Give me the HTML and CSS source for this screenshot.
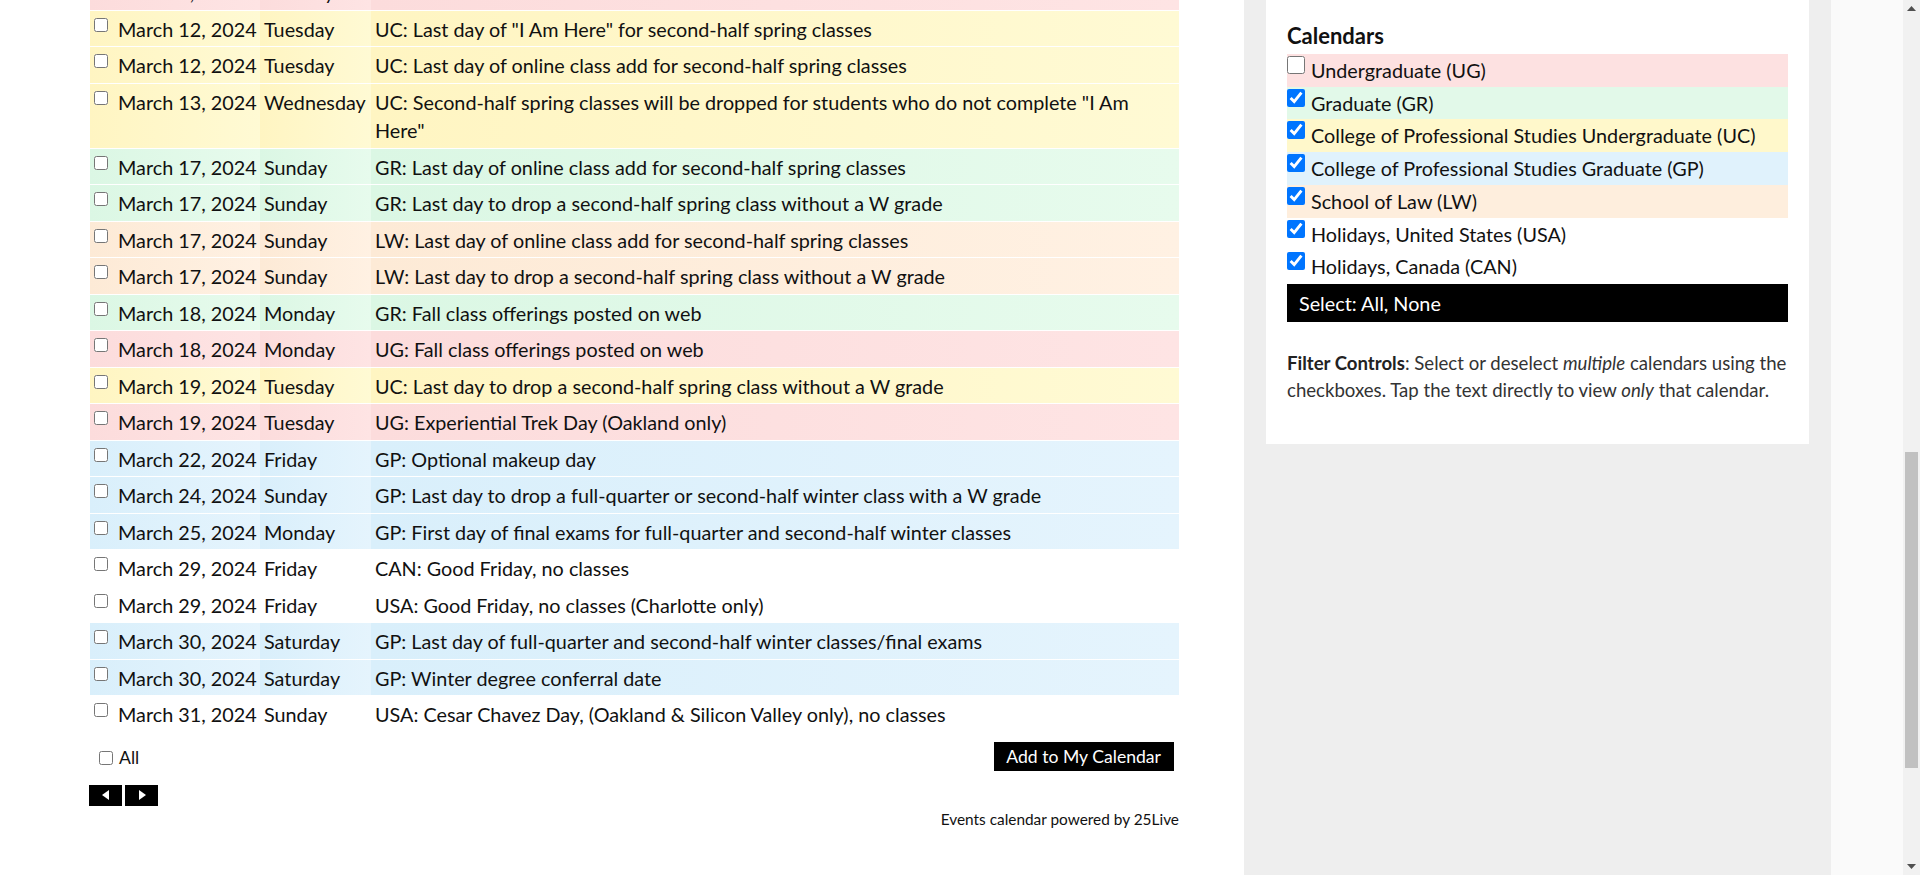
FILE: index.html
```html
<!DOCTYPE html>
<html lang="en">
<head>
<meta charset="utf-8">
<title>Academic Calendar</title>
<link rel="stylesheet" href="styles.css">
</head>
<body>
<div class="page">
  <main class="main">
    <div class="table-clip">
      <table class="events">
        <colgroup><col class="col-date"><col class="col-day"><col></colgroup>
        <tbody>
          <tr class="ug"><td class="c-date"><input type="checkbox"><span>March 5, 2024</span></td><td>Tuesday</td><td>UG: Midterm academic alerts due</td></tr>
          <tr class="uc"><td class="c-date"><input type="checkbox"><span>March 12, 2024</span></td><td>Tuesday</td><td>UC: Last day of "I Am Here" for second-half spring classes</td></tr>
          <tr class="uc"><td class="c-date"><input type="checkbox"><span>March 12, 2024</span></td><td>Tuesday</td><td>UC: Last day of online class add for second-half spring classes</td></tr>
          <tr class="uc"><td class="c-date"><input type="checkbox"><span>March 13, 2024</span></td><td>Wednesday</td><td>UC: Second-half spring classes will be dropped for students who do not complete "I Am Here"</td></tr>
          <tr class="gr"><td class="c-date"><input type="checkbox"><span>March 17, 2024</span></td><td>Sunday</td><td>GR: Last day of online class add for second-half spring classes</td></tr>
          <tr class="gr"><td class="c-date"><input type="checkbox"><span>March 17, 2024</span></td><td>Sunday</td><td>GR: Last day to drop a second-half spring class without a W grade</td></tr>
          <tr class="lw"><td class="c-date"><input type="checkbox"><span>March 17, 2024</span></td><td>Sunday</td><td>LW: Last day of online class add for second-half spring classes</td></tr>
          <tr class="lw"><td class="c-date"><input type="checkbox"><span>March 17, 2024</span></td><td>Sunday</td><td>LW: Last day to drop a second-half spring class without a W grade</td></tr>
          <tr class="gr"><td class="c-date"><input type="checkbox"><span>March 18, 2024</span></td><td>Monday</td><td>GR: Fall class offerings posted on web</td></tr>
          <tr class="ug"><td class="c-date"><input type="checkbox"><span>March 18, 2024</span></td><td>Monday</td><td>UG: Fall class offerings posted on web</td></tr>
          <tr class="uc"><td class="c-date"><input type="checkbox"><span>March 19, 2024</span></td><td>Tuesday</td><td>UC: Last day to drop a second-half spring class without a W grade</td></tr>
          <tr class="ug"><td class="c-date"><input type="checkbox"><span>March 19, 2024</span></td><td>Tuesday</td><td>UG: Experiential Trek Day (Oakland only)</td></tr>
          <tr class="gp"><td class="c-date"><input type="checkbox"><span>March 22, 2024</span></td><td>Friday</td><td>GP: Optional makeup day</td></tr>
          <tr class="gp"><td class="c-date"><input type="checkbox"><span>March 24, 2024</span></td><td>Sunday</td><td>GP: Last day to drop a full-quarter or second-half winter class with a W grade</td></tr>
          <tr class="gp"><td class="c-date"><input type="checkbox"><span>March 25, 2024</span></td><td>Monday</td><td>GP: First day of final exams for full-quarter and second-half winter classes</td></tr>
          <tr class="plain"><td class="c-date"><input type="checkbox"><span>March 29, 2024</span></td><td>Friday</td><td>CAN: Good Friday, no classes</td></tr>
          <tr class="plain"><td class="c-date"><input type="checkbox"><span>March 29, 2024</span></td><td>Friday</td><td>USA: Good Friday, no classes (Charlotte only)</td></tr>
          <tr class="gp"><td class="c-date"><input type="checkbox"><span>March 30, 2024</span></td><td>Saturday</td><td>GP: Last day of full-quarter and second-half winter classes/final exams</td></tr>
          <tr class="gp"><td class="c-date"><input type="checkbox"><span>March 30, 2024</span></td><td>Saturday</td><td>GP: Winter degree conferral date</td></tr>
          <tr class="plain"><td class="c-date"><input type="checkbox"><span>March 31, 2024</span></td><td>Sunday</td><td>USA: Cesar Chavez Day, (Oakland &amp; Silicon Valley only), no classes</td></tr>
        </tbody>
      </table>
    </div>
    <div class="foot">
      <label class="all"><input type="checkbox">All</label>
      <button class="add-btn" type="button">Add to My Calendar</button>
    </div>
    <div class="pager">
      <button class="pg" type="button" aria-label="Previous"><svg width="8" height="10" viewBox="0 0 8 10"><path d="M7 0 L7 10 L0 5 Z" fill="#fff"/></svg></button>
      <button class="pg" type="button" aria-label="Next"><svg width="8" height="10" viewBox="0 0 8 10"><path d="M1 0 L1 10 L8 5 Z" fill="#fff"/></svg></button>
    </div>
    <div class="powered">Events calendar powered by 25Live</div>
  </main>
  <aside class="side">
    <div class="panel">
      <h2 class="cal-title">Calendars</h2>
      <ul class="cals">
        <li class="ug"><input type="checkbox"><span>Undergraduate (UG)</span></li>
        <li class="gr"><input type="checkbox" checked><span>Graduate (GR)</span></li>
        <li class="uc"><input type="checkbox" checked><span>College of Professional Studies Undergraduate (UC)</span></li>
        <li class="gp"><input type="checkbox" checked><span>College of Professional Studies Graduate (GP)</span></li>
        <li class="lw"><input type="checkbox" checked><span>School of Law (LW)</span></li>
        <li class="plain"><input type="checkbox" checked><span>Holidays, United States (USA)</span></li>
        <li class="plain"><input type="checkbox" checked><span>Holidays, Canada (CAN)</span></li>
      </ul>
      <div class="select-bar">Select: All, None</div>
      <p class="help"><strong>Filter Controls</strong>: Select or deselect <em>multiple</em> calendars using the checkboxes. Tap the text directly to view <em>only</em> that calendar.</p>
    </div>
  </aside>
  <div class="edge"></div>
  <div class="scrollbar">
    <div class="sb-arrow"><svg width="9" height="5" viewBox="0 0 9 5"><path d="M0 5 L4.5 0 L9 5 Z" fill="#505050"/></svg></div>
    <div class="sb-track"><div class="sb-thumb"></div></div>
    <div class="sb-arrow"><svg width="9" height="5" viewBox="0 0 9 5"><path d="M0 0 L4.5 5 L9 0 Z" fill="#505050"/></svg></div>
  </div>
</div>
</body>
</html>
```
FILE: styles.css
```css
html, body {
  margin: 0;
  height: 100%;
  overflow: hidden;
}
body {
  font-family: Lato, "Open Sans", "Liberation Sans", sans-serif;
  color: #111;
  background: #fff;
}
.page {
  display: flex;
  height: 875px;
}
.main {
  flex: none;
  width: 1089px;
  padding-left: 90px;
  margin-right: 65px;
}
.table-clip {
  overflow: hidden;
}
.events {
  width: 1089px;
  table-layout: fixed;
  border-collapse: separate;
  border-spacing: 0;
  margin-top: -26px;
  font-size: 19.8px;
  line-height: 28.5px;
}
.col-date { width: 170px; }
.col-day { width: 111px; }
.events td {
  padding: 4px 4px 3px;
  border-bottom: 1px solid #fff;
  vertical-align: top;
  background: linear-gradient(to right, var(--c1), var(--c2));
}
.events td.c-date {
  white-space: nowrap;
}
.events td.c-date input {
  width: 14px;
  height: 14px;
  margin: 3px 10px 0 0;
  vertical-align: top;
}
.ug { --c1: #fcdcdc; --c2: #fee4e4; --c: #fde1e1; }
.gr { --c1: #dbf7e4; --c2: #e7fbed; --c: #e2f9e9; }
.uc { --c1: #fff5c2; --c2: #fffad4; --c: #fff8cb; }
.gp { --c1: #d9effb; --c2: #e5f4fd; --c: #e0f2fc; }
.lw { --c1: #fdead6; --c2: #fff1e3; --c: #feeedd; }
.plain { --c1: #fff; --c2: #fff; --c: #fff; }
.cals li { background: var(--c); }

.foot {
  display: flex;
  justify-content: space-between;
  align-items: flex-start;
  margin-top: 9px;
  padding-right: 5px;
}
.all {
  display: flex;
  align-items: flex-start;
  padding: 5px 0 0 9px;
  font-size: 17.6px;
  line-height: 21px;
}
.all input {
  width: 14px;
  height: 14px;
  margin: 4px 6px 0 0;
}
.add-btn {
  font-family: inherit;
  font-size: 17.6px;
  line-height: 21px;
  color: #fff;
  background: #000;
  border: 0;
  border-radius: 0;
  padding: 4px 13px 4px 12px;
  height: 29px;
}
.pager {
  display: flex;
  gap: 3px;
  margin-top: 14px;
  margin-left: -1px;
}
.pg {
  width: 33px;
  height: 21px;
  padding: 0;
  border: 0;
  border-radius: 0;
  background: #000;
  display: flex;
  align-items: center;
  justify-content: center;
}
.powered {
  margin-top: 4px;
  text-align: right;
  font-size: 15.4px;
  line-height: 18px;
  color: #111;
}

.side {
  flex: none;
  width: 543px;
  padding: 0 22px;
  background: #eee;
  display: flex;
  flex-direction: column;
  align-items: stretch;
}
.panel {
  background: #fff;
  padding: 23px 21px 40px;
}
.cal-title {
  margin: 0 0 6px;
  font-size: 22px;
  line-height: 25px;
  font-weight: 700;
  color: #111;
}
.cals {
  list-style: none;
  margin: 0;
  padding: 0;
}
.cals li {
  display: flex;
  align-items: flex-start;
  padding: 2px 0;
  font-size: 19.8px;
  line-height: 28.7px;
}
.cals li input {
  width: 18px;
  height: 18px;
  margin: 0 6px 0 0;
  flex: none;
}
.select-bar {
  margin-top: 1px;
  background: #000;
  color: #fff;
  font-size: 19.8px;
  line-height: 38px;
  padding-left: 12px;
}
.help {
  margin: 28px -4px 0 0;
  font-size: 18.6px;
  line-height: 27px;
  color: #333;
}
.help strong { color: #222; }

.edge {
  flex: 1;
  background: #fafafa;
}
.scrollbar {
  flex: none;
  width: 17px;
  background: #f1f1f1;
  display: flex;
  flex-direction: column;
}
.sb-arrow {
  height: 17px;
  display: flex;
  align-items: center;
  justify-content: center;
}
.sb-track {
  flex: 1;
  display: flex;
  flex-direction: column;
  padding: 435px 2px 0;
}
.sb-thumb {
  height: 316px;
  background: #c1c1c1;
}
```
